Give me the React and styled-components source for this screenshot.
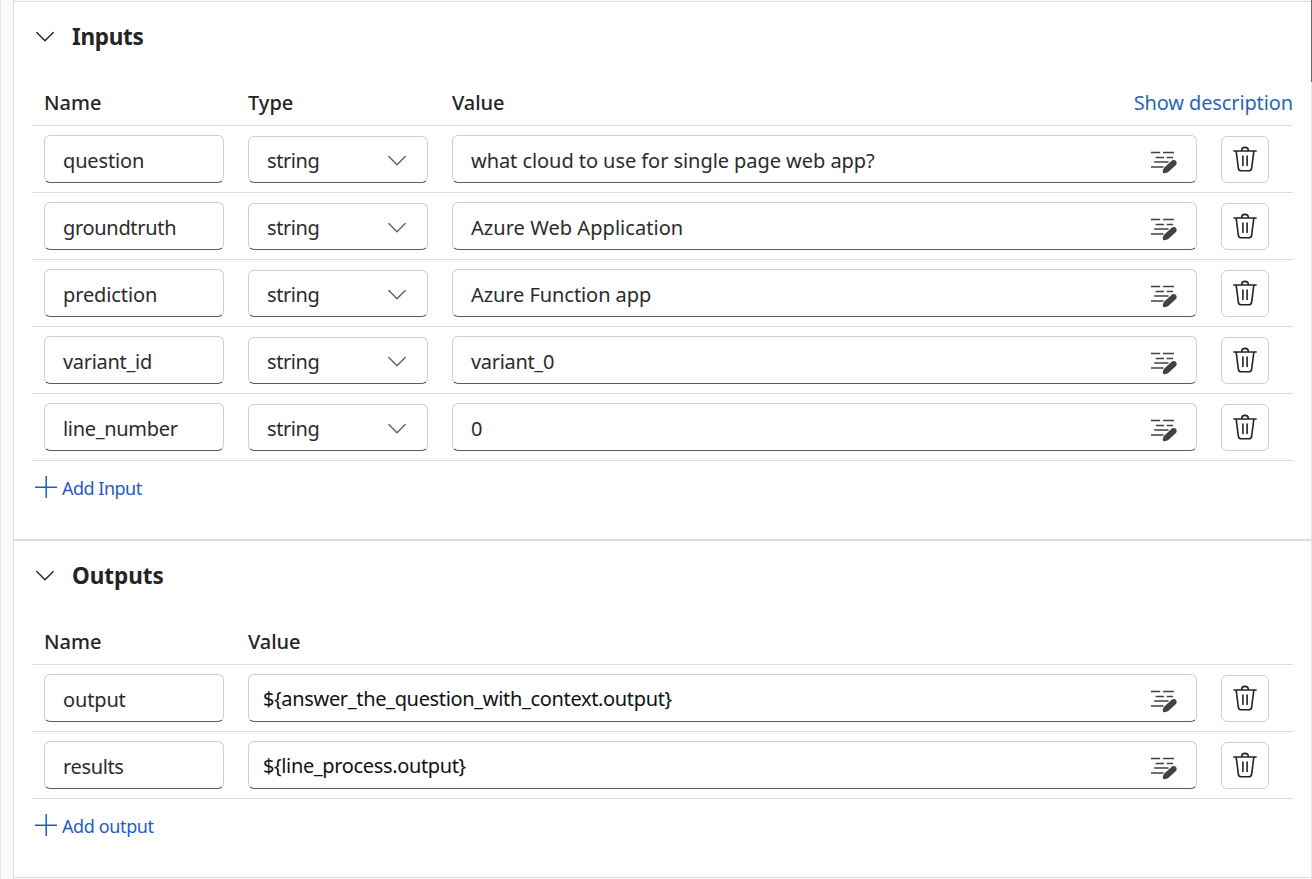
import React from 'react';
import styled, { createGlobalStyle } from 'styled-components';

const GlobalStyle = createGlobalStyle`
  * { box-sizing: border-box; }
  body {
    margin: 0;
    background: #fff;
    color: #242424;
    font-family: "Noto Sans", "Segoe UI", sans-serif;
    font-size: 20px;
    overflow: hidden;
  }
  button { font: inherit; background: none; border: 0; padding: 0; cursor: pointer; }
`;

const Page = styled.main`
  display: flex;
  width: 1312px;
  height: 879px;
`;

const Gutter = styled.div`
  width: 13px;
  flex: none;
  background: #fafafa;
  border-left: 1px solid #e2e2e2;
`;

const Panel = styled.div`
  flex: 1;
  min-width: 0;
  padding-top: 1px;
  background: #f9f9f9;
  border-left: 1px solid #dcdcdc;
`;

const ScrollTrack = styled.div`
  width: 1px;
  flex: none;
  background: #e6e6e6;
`;

const ScrollThumb = styled.div`
  height: 82px;
  background: #6b6b6b;
`;

const Section = styled.section`
  background: #fff;
  border-top: ${(p) => p.$line}px solid #dedede;
  padding: 0 18px;
  &:last-of-type { border-bottom: 1px solid #dcdcdc; }
`;

const TitleRow = styled.div`
  display: flex;
  align-items: center;
  height: 70px;
  padding-left: 4px;
`;

const Title = styled.h2`
  margin: 0 0 0 18px;
  font-size: 22.5px;
  font-weight: 700;
  line-height: 30px;
  letter-spacing: ${(p) => p.$track}px;
`;

const Row = styled.div`
  display: grid;
  grid-template-columns: ${(p) => (p.$typed ? '180px 180px 745px 48px' : '180px 949px 48px')};
  column-gap: 24px;
  align-items: end;
  height: 67px;
  padding: 0 12px 9px;
  border-bottom: 1px solid #dedede;
`;

const HeaderRow = styled.div`
  display: grid;
  grid-template-columns: ${(p) => (p.$typed ? '180px 180px 1fr auto' : '180px 1fr')};
  column-gap: 24px;
  align-items: center;
  height: 54px;
  padding: 8px 0 0 12px;
  border-bottom: 1px solid #dedede;
`;

const Heading = styled.span`
  font-weight: 500;
  line-height: 28px;
  letter-spacing: ${(p) => p.$track}px;
`;

const DescriptionLink = styled.button`
  color: #2a66b4;
  line-height: 28px;
  letter-spacing: ${(p) => p.$track}px;
`;

const Field = styled.div`
  display: flex;
  align-items: center;
  justify-content: space-between;
  height: 48px;
  padding: 0 19px 0 ${(p) => (p.$code ? 14 : 18)}px;
  border: 1px solid #cfcfcf;
  border-bottom-color: #5c5c5c;
  border-radius: 6px;
  color: ${(p) => (p.$code ? '#111' : '#2b2b2b')};
  white-space: nowrap;
`;

const Dropdown = styled(Field)`
  height: 47px;
  padding-right: 21px;
`;

const FieldText = styled.span`
  padding-top: ${(p) => p.$drop}px;
  line-height: 28px;
  letter-spacing: ${(p) => p.$track}px;
`;

const DeleteButton = styled.button`
  && {
    display: flex;
    align-items: center;
    justify-content: center;
    width: 48px;
    height: 47px;
    padding-bottom: 1px;
    border: 1px solid #cfcfcf;
    border-radius: 6px;
  }
`;

const AddBar = styled.div`
  height: 78px;
  padding: 13px 0 0 3px;
`;

const AddButton = styled.button`
  && {
    display: flex;
    align-items: center;
    gap: 5px;
    color: #1f5cc4;
    font-size: 18px;
    line-height: 28px;
    letter-spacing: ${(p) => p.$track}px;
  }
`;

const Icon = styled.svg`
  display: block;
  flex: none;
  fill: none;
  margin-top: ${(p) => p.$top || 0}px;
  margin-bottom: ${(p) => p.$bottom || 0}px;
`;

const Chevron = ({ color, top }) => (
  <Icon $top={top} width="18" height="12" viewBox="0 0 18 12" stroke={color} strokeWidth="1.4">
    <path d="M0.8 1.6L9 9.8L17.2 1.6" strokeLinecap="round" strokeLinejoin="round" />
  </Icon>
);

const EditIcon = () => (
  <Icon $top={6} width="27" height="23" viewBox="0 0 27 23" stroke="#424242" strokeWidth="1.5">
    <path d="M1 1.6H10.2M13 1.6H24M5.7 6.4H14M16.6 6.4H23M4.2 11.1H18.5M1 15.9H13.5" />
    <path
      d="M12.8 20.6C12.9 19 13.2 17.6 14.4 16.4L21.6 9.8C24.6 7.6 28.2 10.8 26 13.9L18.8 20.6C17.4 21.8 16 22 14.2 22.3C13.2 22.4 12.7 21.7 12.8 20.6Z"
      fill="#424242"
      stroke="none"
    />
  </Icon>
);

const TrashIcon = () => (
  <Icon width="24" height="26" viewBox="0 0 24 26" stroke="#242424" strokeWidth="1.6">
    <path
      d="M0.9 5H23.1M8.6 4.8C8.6 0.2 15.4 0.2 15.4 4.8M3.2 5.3L5.3 21.8C5.5 23.9 6.5 24.8 8.3 24.8H15.7C17.5 24.8 18.5 23.9 18.7 21.8L20.8 5.3M9.9 10V19.4M14.1 10V19.4"
      strokeLinecap="round"
    />
  </Icon>
);

const PlusIcon = () => (
  <Icon $bottom={2} width="22" height="22" viewBox="0 0 22 22" stroke="#1f5cc4" strokeWidth="1.5">
    <path d="M11.2 0V22M0 11.2H22" />
  </Icon>
);

const inputs = [
  { name: ['question', -0.15], value: ['what cloud to use for single page web app?', -0.06] },
  { name: ['groundtruth', -0.32], value: ['Azure Web Application', 0.05] },
  { name: ['prediction', -0.12], value: ['Azure Function app', -0.07] },
  { name: ['variant_id', -0.3], value: ['variant_0', -0.32] },
  { name: ['line_number', -0.32], value: ['0', 0] },
];

const outputs = [
  { name: ['output', -0.15], value: ['${answer_the_question_with_context.output}', -0.34] },
  { name: ['results', -0.35], value: ['${line_process.output}', -0.36] },
];

const VariableRow = ({ item, typed }) => (
  <Row $typed={typed}>
    <Field>
      <FieldText $drop={4} $track={item.name[1]}>{item.name[0]}</FieldText>
    </Field>
    {typed && (
      <Dropdown>
        <FieldText $drop={2} $track={-0.4}>string</FieldText>
        <Chevron color="#616161" top={2} />
      </Dropdown>
    )}
    <Field $code={!typed}>
      <FieldText $drop={typed ? 4 : 2} $track={item.value[1]}>{item.value[0]}</FieldText>
      <EditIcon />
    </Field>
    <DeleteButton aria-label="Delete">
      <TrashIcon />
    </DeleteButton>
  </Row>
);

export default function App() {
  return (
    <Page>
      <GlobalStyle />
      <Gutter />
      <Panel>
        <Section $line={1}>
          <TitleRow>
            <Chevron color="#242424" />
            <Title $track={-0.3}>Inputs</Title>
          </TitleRow>
          <HeaderRow $typed>
            <Heading $track={0}>Name</Heading>
            <Heading $track={0}>Type</Heading>
            <Heading $track={-0.1}>Value</Heading>
            <DescriptionLink $track={-0.12}>Show description</DescriptionLink>
          </HeaderRow>
          {inputs.map((item) => (
            <VariableRow key={item.name[0]} item={item} typed />
          ))}
          <AddBar>
            <AddButton $track={-0.5}>
              <PlusIcon />
              Add Input
            </AddButton>
          </AddBar>
        </Section>
        <Section $line={2}>
          <TitleRow>
            <Chevron color="#242424" />
            <Title $track={-0.05}>Outputs</Title>
          </TitleRow>
          <HeaderRow>
            <Heading $track={0}>Name</Heading>
            <Heading $track={-0.1}>Value</Heading>
          </HeaderRow>
          {outputs.map((item) => (
            <VariableRow key={item.name[0]} item={item} />
          ))}
          <AddBar>
            <AddButton $track={-0.38}>
              <PlusIcon />
              Add output
            </AddButton>
          </AddBar>
        </Section>
      </Panel>
      <ScrollTrack>
        <ScrollThumb />
      </ScrollTrack>
    </Page>
  );
}
